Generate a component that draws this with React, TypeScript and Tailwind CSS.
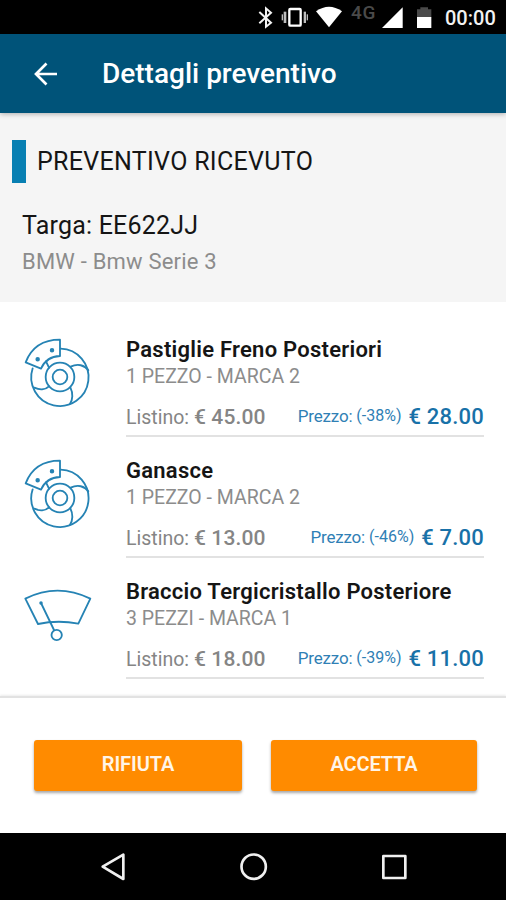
import React from "react";

type Item = {
  icon: "brake" | "wiper";
  title: string;
  sub: string;
  list: string;
  discount: string;
  price: string;
};

const items: Item[] = [
  { icon: "brake", title: "Pastiglie Freno Posteriori", sub: "1 PEZZO - MARCA 2", list: "€ 45.00", discount: "(-38%)", price: "€ 28.00" },
  { icon: "brake", title: "Ganasce", sub: "1 PEZZO - MARCA 2", list: "€ 13.00", discount: "(-46%)", price: "€ 7.00" },
  { icon: "wiper", title: "Braccio Tergicristallo Posteriore", sub: "3 PEZZI - MARCA 1", list: "€ 18.00", discount: "(-39%)", price: "€ 11.00" },
];

function BrakeIcon() {
  return (
    <svg width="100" height="100" viewBox="0 0 300 300" fill="none" stroke="#2583b4" strokeWidth="5.5" strokeLinejoin="round" strokeLinecap="round">
      <circle cx="150" cy="156" r="43" />
      <circle cx="150" cy="156" r="22" />
      <path d="M152 71 A86 86 0 1 1 68 130" />
      <path d="M47 112 C64 68 100 44 150 44 L150 93 C124 94 103 108 93 131 Z" />
      <path d="M182 125 C203 115 224 120 235 136" />
      <path d="M181 187 C190 205 188 225 180 236" />
      <path d="M117 184 C106 195 88 195 73 188" />
      <path d="M108 109 L117 128" />
      <circle cx="126" cy="76" r="4" fill="#2583b4" />
      <circle cx="83" cy="103" r="4" fill="#2583b4" />
    </svg>
  );
}

function WiperIcon() {
  return (
    <svg width="100" height="100" viewBox="0 -9 300 300" fill="none" stroke="#2583b4" strokeWidth="5.5" strokeLinejoin="round" strokeLinecap="round">
      <path d="M46 86 Q142 38 241 86 L205 161 Q144 149 84 162 Z" />
      <path d="M93 99 L132 180" />
      <circle cx="93" cy="99" r="2.5" fill="#2583b4" />
      <circle cx="140" cy="195" r="15.5" />
    </svg>
  );
}

function StatusIcons() {
  return (
    <svg className="block" width="195" height="34" viewBox="0 0 585 102">
      <path d="M40 36 L75 68 L60 80 V25 L75 38 L40 70" fill="none" stroke="#f4f4f4" strokeWidth="6" />
      <g fill="#bdbdbd">
        <rect x="107" y="43" width="4" height="18" />
        <rect x="113" y="35" width="8" height="34" />
        <rect x="173" y="35" width="7" height="34" />
        <rect x="182" y="43" width="4" height="18" />
      </g>
      <rect x="130" y="27" width="34" height="50" rx="3" fill="none" stroke="#fff" strokeWidth="7" />
      <path d="M210 34 Q249 7 288 34 L249 82 Z" fill="#fff" />
      <path d="M470 22 V84 H408 Z" fill="#fff" />
      <path d="M513 52 V28 H523 V22 H546 V28 H556 V52 Z" fill="#4a4a4a" />
      <path d="M513 51 H556 V84 H513 Z" fill="#fff" />
      <text x="315" y="57" fill="#4a4a4a" fontFamily="Roboto" fontWeight="500" fontSize="57" textLength="73">4G</text>
    </svg>
  );
}

function ItemRow({ item }: { item: Item }) {
  return (
    <div className="flex h-[121px]">
      <div className="ml-[10px] w-[116px] shrink-0">{item.icon === "brake" ? <BrakeIcon /> : <WiperIcon />}</div>
      <div className="mt-[11px] h-[101px] w-[358px] whitespace-nowrap border-b-2 border-[#e2e2e2]">
        <div className="h-7 text-[22px] font-semibold leading-[28px] tracking-[0.25px] text-[#151515]">{item.title}</div>
        <div className="h-[26px] text-[19.5px] leading-[26px] text-[#8c8c8c]">{item.sub}</div>
        <div className="mt-[13px] flex h-7 items-baseline justify-between leading-7">
          <div className="text-[19.5px] text-[#858585]">
            Listino: <span className="text-[21px] font-medium tracking-[0.15px]">{item.list}</span>
          </div>
          <div className="flex items-baseline text-[#2f80b5]">
            <span className="relative -top-[2px] mr-[4px] text-[17px] tracking-[-0.2px]">Prezzo:</span>
            <span className="relative -top-[3px] mr-[7px] text-[16px]">{item.discount}</span>
            <span className="text-[22px] font-medium tracking-[0.2px] text-[#1871a8]">{item.price}</span>
          </div>
        </div>
      </div>
    </div>
  );
}

export default function App() {
  return (
    <div className="flex h-[900px] w-[506px] flex-col overflow-hidden bg-white font-[Roboto,sans-serif]">
      <div className="flex h-[34px] shrink-0 bg-black pl-[246px]">
        <StatusIcons />
        <span className="ml-[4px] whitespace-nowrap text-[20px] font-medium leading-[36px] text-[#f2f2f2]">00:00</span>
      </div>
      <header className="z-10 flex h-[79px] shrink-0 items-center bg-[#005379] shadow-[0_1px_5px_rgba(0,0,0,0.3)]">
        <svg className="ml-[33px]" width="26" height="26" viewBox="0 0 26 26" fill="none" stroke="#fff" strokeWidth="2.7">
          <path d="M24 13 H3 M13.5 2.5 L3 13 L13.5 23.5" />
        </svg>
        <h1 className="ml-[43px] whitespace-nowrap pt-[1px] text-[28px] font-medium text-white">Dettagli preventivo</h1>
      </header>
      <section className="h-[189px] shrink-0 bg-[#f5f5f5] pt-[27px]">
        <div className="flex h-[43px] items-center">
          <div className="ml-[12px] h-full w-[14px] bg-[#087fb2]" />
          <h2 className="ml-[11px] whitespace-nowrap text-[25px] tracking-[0.3px] text-[#151515]">PREVENTIVO RICEVUTO</h2>
        </div>
        <p className="ml-[22px] mt-[25px] text-[25px] leading-9 tracking-[0.2px] text-[#151515]">Targa: EE622JJ</p>
        <p className="ml-[22px] text-[22px] leading-9 tracking-[0.2px] text-[#8c8c8c]">BMW - Bmw Serie 3</p>
      </section>
      <main className="h-[394px] shrink-0 overflow-hidden pt-[23px]">
        {items.map((item) => (
          <ItemRow key={item.title} item={item} />
        ))}
      </main>
      <footer className="z-10 flex h-[137px] shrink-0 gap-[29px] border-t-2 border-[#e2e2e2] bg-white pl-[34px] pt-[42px] shadow-[0_-1px_2px_rgba(0,0,0,0.08)]">
        <button className="h-[51px] w-[208px] rounded-[3px] bg-[#ff8b00] pb-[4px] text-[20px] font-semibold tracking-[-0.1px] text-[#fff5e8] shadow-[0_2px_3px_rgba(0,0,0,0.35)]">RIFIUTA</button>
        <button className="h-[51px] w-[206px] rounded-[3px] bg-[#ff8b00] pb-[4px] text-[20px] font-semibold tracking-[-0.1px] text-[#fff5e8] shadow-[0_2px_3px_rgba(0,0,0,0.35)]">ACCETTA</button>
      </footer>
      <nav className="h-[67px] shrink-0 bg-black pl-[80px]">
        <svg width="350" height="67" viewBox="0 9 1050 201" fill="none" stroke="#f0f0f0" strokeWidth="8" strokeLinejoin="round">
          <path d="M68 110 L130 74 V147 Z" />
          <circle cx="521" cy="110" r="36.5" />
          <rect x="910" y="78" width="66" height="66" />
        </svg>
      </nav>
    </div>
  );
}
